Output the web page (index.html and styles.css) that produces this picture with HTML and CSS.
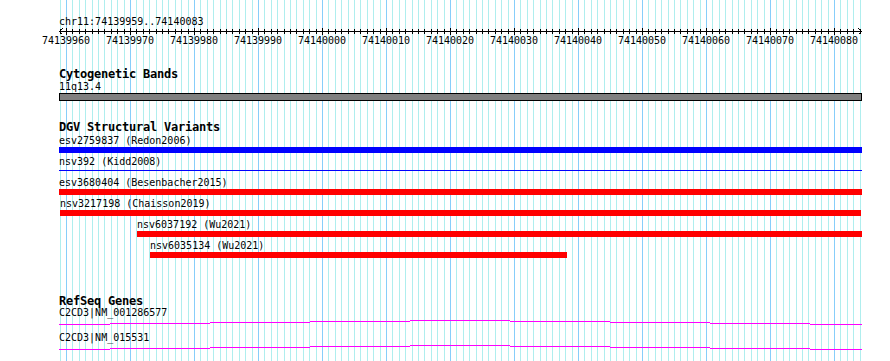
FILE: index.html
```html
<!DOCTYPE html>
<html lang="en">
<head>
  <meta charset="UTF-8">
  <title>chr11:74139959..74140083</title>
  <link rel="stylesheet" href="styles.css">
</head>
<body>

  <div class="panel">
    <!-- grid, one line per base -->
    <svg class="grid" id="grid" width="890" height="361"></svg>

    <div class="tracks">
      <div class="region">chr11:74139959..74140083</div>
      <svg class="ruler" id="ruler" width="803" height="9"></svg>
      <div class="ruler-labels" id="rulerLabels"></div>

      <!-- cytoband -->
      <section class="track track-bands">
        <h3 class="track-title">Cytogenetic Bands</h3>
        <div class="feature">
          <div class="label">11q13.4</div>
          <div class="band"></div>
        </div>
      </section>

      <!-- DGV -->
      <section class="track track-dgv">
        <h3 class="track-title">DGV Structural Variants</h3>
        <div class="feature">
          <div class="label">esv2759837 (Redon2006)</div>
          <div class="bar bar-blue"></div>
        </div>
        <div class="feature">
          <div class="label">nsv392 (Kidd2008)</div>
          <div class="bar bar-line"></div>
        </div>
        <div class="feature">
          <div class="label">esv3680404 (Besenbacher2015)</div>
          <div class="bar bar-red"></div>
        </div>
        <div class="feature" style="margin-left:1px;width:801px">
          <div class="label">nsv3217198 (Chaisson2019)</div>
          <div class="bar bar-red"></div>
        </div>
        <div class="feature" style="margin-left:78px;width:725px">
          <div class="label">nsv6037192 (Wu2021)</div>
          <div class="bar bar-red"></div>
        </div>
        <div class="feature" style="margin-left:91px;width:417px">
          <div class="label">nsv6035134 (Wu2021)</div>
          <div class="bar bar-red"></div>
        </div>
      </section>

      <!-- genes -->
      <section class="track track-genes">
        <h3 class="track-title">RefSeq Genes</h3>
        <div class="feature gene">
          <div class="label">C2CD3|NM_001286577</div>
          <svg class="intron" width="803" height="15">
            <path d="M0 6.5H51M51 5.5H151M151 4.5H251M251 3.5H351M351 2.5H451M451 3.5H551M551 4.5H651M651 5.5H751M751 6.5H803"/>
          </svg>
        </div>
        <div class="feature gene">
          <div class="label">C2CD3|NM_015531</div>
          <svg class="intron" width="803" height="15">
            <path d="M0 6.5H51M51 5.5H151M151 4.5H251M251 3.5H351M351 2.5H451M451 3.5H551M551 4.5H651M651 5.5H751M751 6.5H803"/>
          </svg>
        </div>
      </section>
    </div>
  </div>

  <script>
    const NS = 'http://www.w3.org/2000/svg';
    const firstTen = 74139960;   // base under x = 66
    const originX = 66;
    const pxPerBase = 6.4;
    const trackLeft = 59;

    function line(svg, x1, y1, x2, y2, cls) {
      const l = document.createElementNS(NS, 'line');
      l.setAttribute('x1', x1);
      l.setAttribute('y1', y1);
      l.setAttribute('x2', x2);
      l.setAttribute('y2', y2);
      l.setAttribute('class', cls);
      svg.appendChild(l);
    }

    // grid + ruler ticks
    const grid = document.getElementById('grid');
    const ruler = document.getElementById('ruler');
    for (let k = -1; k <= 124; k++) {
      const x = Math.round(originX + pxPerBase * k) + 0.5;
      const major = (firstTen + k) % 10 === 0;
      line(grid, x, 0, x, 361, major ? 'major' : 'minor');
      const rx = x - trackLeft;
      if (major) line(ruler, rx, 1, rx, 8, 'tick');
      else line(ruler, rx, 2, rx, 7, 'tick');
    }

    // ruler axis with arrowheads
    line(ruler, 0, 4.5, 803, 4.5, 'tick');
    line(ruler, 0.5, 4.5, 3.5, 1.5, 'tick');
    line(ruler, 0.5, 4.5, 3.5, 7.5, 'tick');
    line(ruler, 802.5, 4.5, 799.5, 1.5, 'tick');
    line(ruler, 802.5, 4.5, 799.5, 7.5, 'tick');

    // ruler labels every 10 bases
    const labels = document.getElementById('rulerLabels');
    for (let pos = 74139960; pos <= 74140080; pos += 10) {
      const span = document.createElement('span');
      span.textContent = pos;
      labels.appendChild(span);
    }
  </script>

</body>
</html>
```

FILE: styles.css
```css
body {
  margin: 0;
  background: #fff;
  color: #000;
  font-family: "DejaVu Sans Mono", "Liberation Mono", monospace;
}

.panel {
  position: relative;
  width: 890px;
  height: 361px;
  overflow: hidden;
}

.grid {
  position: absolute;
  top: 0;
  left: 0;
}

.grid .minor {
  stroke: #afeeee;
  stroke-width: 1;
}

.grid .major {
  stroke: #87cefa;
  stroke-width: 1;
}

.tracks {
  position: relative;
  width: 803px;
  padding: 17px 0 0 59px;
}

.region,
.label,
.ruler-labels {
  font-size: 10px;
  line-height: 10px;
  white-space: nowrap;
}

.ruler {
  display: block;
}

.ruler .tick {
  stroke: #000;
  stroke-width: 1;
  shape-rendering: crispEdges;
}

.ruler-labels {
  display: flex;
  margin-left: -25px;
}

.ruler-labels span {
  flex: 0 0 64px;
  text-align: center;
}

.track-title {
  margin: 0 0 1px;
  font-size: 12px;
  letter-spacing: -0.22px;
  line-height: 13px;
  font-weight: bold;
}

.track-bands {
  margin-top: 22px;
}

.track-dgv {
  margin-top: 20px;
}

.track-dgv .track-title {
  margin-bottom: 2px;
}

/* last bar's 4px bottom margin collapses into this one */
.track-genes {
  margin-top: 37px;
}

.track-genes .track-title {
  margin-bottom: 0;
}

.feature .label {
  margin-bottom: 1px;
}

.band {
  box-sizing: border-box;
  height: 8px;
  border: 1px solid #000;
  background: #808080;
}

.bar {
  height: 6px;
  margin-bottom: 4px;
}

.bar-blue {
  background: #0000ff;
}

.bar-red {
  background: #ff0000;
}

.bar-line {
  height: 1px;
  margin: 3px 0 7px;
  background: #0000ff;
}

.gene .label {
  margin-bottom: 0;
}

.intron {
  display: block;
}

.intron path {
  fill: none;
  stroke: #ff00ff;
  stroke-width: 1;
  shape-rendering: crispEdges;
}
```
